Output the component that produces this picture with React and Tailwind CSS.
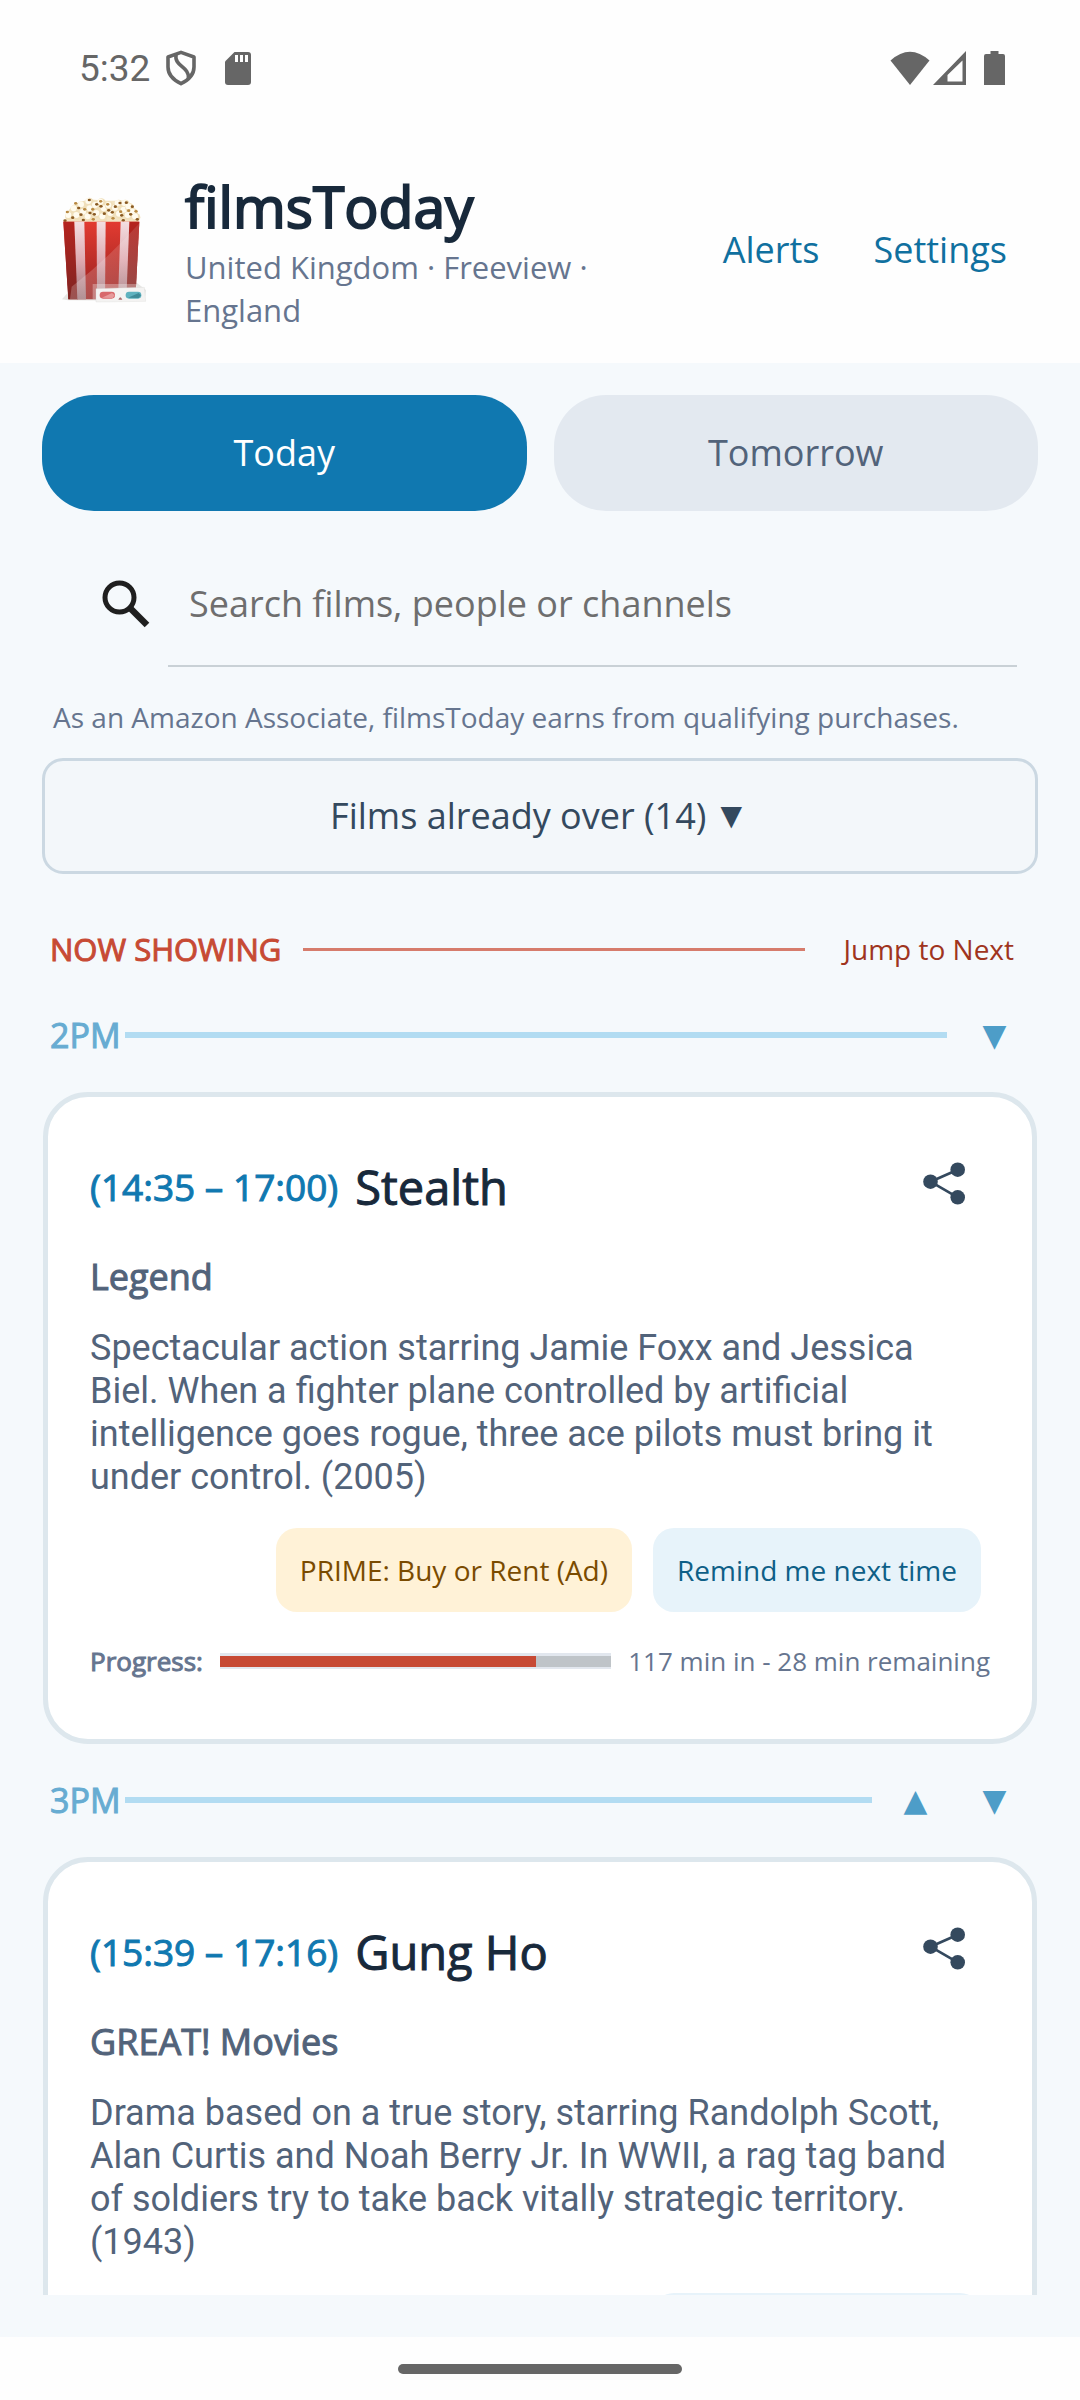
import React from "react";

const FILMS = [
  {
    hour: "2PM",
    up: false,
    time: "(14:35 – 17:00)",
    title: "Stealth",
    channel: "Legend",
    text: "Spectacular action starring Jamie Foxx and Jessica Biel. When a fighter plane controlled by artificial intelligence goes rogue, three ace pilots must bring it under control. (2005)",
    prime: true,
    progress: { elapsed: 117, remaining: 28 },
  },
  {
    hour: "3PM",
    up: true,
    time: "(15:39 – 17:16)",
    title: "Gung Ho",
    channel: "GREAT! Movies",
    text: "Drama based on a true story, starring Randolph Scott, Alan Curtis and Noah Berry Jr. In WWII, a rag tag band of soldiers try to take back vitally strategic territory. (1943)",
    prime: false,
    progress: null,
  },
];

const KERNELS = [
  [88, 108], [104, 88], [112, 108], [126, 76], [132, 98], [148, 66], [152, 88], [146, 112],
  [168, 78], [172, 102], [184, 68], [194, 88], [190, 112], [208, 78], [214, 102], [228, 86],
  [236, 72], [240, 104], [256, 72], [254, 92], [268, 82], [266, 108], [280, 98], [288, 112],
];

const SPECKS = [
  [82, 96], [75, 122], [98, 113], [107, 70], [116, 84], [123, 104], [134, 88], [148, 60], [150, 99],
  [158, 88], [163, 103], [170, 73], [182, 64], [183, 79], [193, 101], [203, 73], [206, 91],
  [217, 97], [219, 115], [226, 80], [240, 69], [242, 95], [245, 106], [259, 68], [266, 92],
  [272, 103], [277, 80], [288, 94], [292, 118], [130, 120], [160, 118], [250, 121],
];

function Popcorn() {
  return (
    <svg className="h-[140px] w-[130px] shrink-0" viewBox="0 0 390 420" aria-hidden="true">
      <defs>
        <linearGradient id="red" x1="0" y1="0" x2="0" y2="1">
          <stop offset="0" stopColor="#e23b31" />
          <stop offset="1" stopColor="#97211f" />
        </linearGradient>
        <linearGradient id="redSide" x1="0" y1="0" x2="0" y2="1">
          <stop offset="0" stopColor="#b5241f" />
          <stop offset="1" stopColor="#7f2421" />
        </linearGradient>
        <linearGradient id="pale" x1="0" y1="0" x2="0" y2="1">
          <stop offset="0" stopColor="#f3dfe1" />
          <stop offset="0.5" stopColor="#dfa9b0" />
          <stop offset="1" stopColor="#9d7478" />
        </linearGradient>
        <linearGradient id="shine" x1="1" y1="0" x2="0" y2="1">
          <stop offset="0" stopColor="#fff" stopOpacity="0.1" />
          <stop offset="1" stopColor="#fff" stopOpacity="0.22" />
        </linearGradient>
      </defs>
      <path d="M66 358 L82 340 L290 308 L318 330 L314 362 L85 361Z" fill="#e6e6e4" />
      <path d="M76 126 L80 98 L100 74 L145 58 L200 62 L255 62 L276 78 L296 126Z" fill="#f3e4c3" />
      {KERNELS.map(([x, y]) => (
        <g key={`${x}-${y}`}>
          <circle cx={x} cy={y} r="13" fill="#f0dfba" />
          <circle cx={x - 3} cy={y - 3} r="9" fill="#fffbee" />
        </g>
      ))}
      {SPECKS.map(([x, y], i) => (
        <ellipse key={`${x}-${y}`} cx={x} cy={y} rx="5" ry="4" fill={i % 3 ? "#8a5a22" : "#b98a43"} />
      ))}
      <path d="M70 125 H298 L286 358 H85Z" fill="url(#red)" />
      <path d="M70 125 H103 L114 358 H85Z" fill="url(#redSide)" />
      <path d="M267 125 H298 L286 358 H258Z" fill="url(#redSide)" />
      <path d="M103 125 H133 L138 358 H112Z" fill="url(#pale)" />
      <path d="M170 125 H197 L195 358 H171Z" fill="url(#pale)" />
      <path d="M242 125 H268 L259 358 H234Z" fill="url(#pale)" />
      <path d="M298 130 L286 358 H90 L95 320 Q200 240 298 130Z" fill="url(#shine)" />
      <path d="M158 312 H290 V358 H158Z" fill="#fff" opacity="0.3" />
      <path d="M168 326 L313 322 L317 364 L168 366Z" fill="#f4f3f2" stroke="#d9d7d6" />
      <rect x="179" y="335" width="46" height="21" rx="10" fill="#d8696c" />
      <path d="M186 353 L216 339 L224 346 L218 354Z" fill="#e79a9b" />
      <rect x="257" y="335" width="47" height="21" rx="10" fill="#5fb2bf" />
      <path d="M264 353 L296 339 L303 346 L296 354Z" fill="#3f8b98" />
      <path d="M235 359 Q241 344 247 359Z" fill="#a86a6c" />
    </svg>
  );
}

function StatusBar() {
  return (
    <div className="flex h-[136px] shrink-0 items-center justify-between pr-[75px] pl-[79px] text-[#666]">
      <div className="flex items-center">
        <span className="font-[Roboto,sans-serif] text-[37px] leading-[43px]">5:32</span>
        <svg className="ml-[15px] h-9 w-8" viewBox="0 0 32 36" fill="none" stroke="currentColor" strokeWidth="3.6" aria-hidden="true">
          <path d="M16 2.4 L29 7 V17 Q29 27.5 16 33.6 Q3 27.5 3 17 V7Z" strokeLinejoin="round" />
          <path d="M11 4 C9 17 24 16 23.500 28" />
        </svg>
        <svg className="ml-7 h-[34px] w-[26px]" viewBox="0 0 26 34" fill="currentColor" aria-hidden="true">
          <path d="M9.500 1 H23 Q26 1 26 4 V31 Q26 34 23 34 H3 Q0 34 0 31 V10.500Z" />
          <path d="M10 4 h3 v7 h-3z M15 4 h3 v7 h-3z M20 4 h3 v7 h-3z" fill="#fefefe" />
        </svg>
      </div>
      <div className="flex items-center">
        <svg className="h-[34px] w-10" viewBox="0 0 40 34" fill="currentColor" aria-hidden="true">
          <path d="M20 34 L0.500 9.500 Q20 -8 39.500 9.500Z" />
        </svg>
        <svg className="ml-[3px] h-[34px] w-[33px]" viewBox="0 0 33 34" fill="currentColor" aria-hidden="true">
          <path fillRule="evenodd" d="M33 0 V34 H0Z M29.500 9.500 L14.500 24 V30.500 H29.500Z" />
        </svg>
        <svg className="ml-[18px] h-[34px] w-[21px]" viewBox="0 0 21 34" fill="currentColor" aria-hidden="true">
          <path d="M6.500 0 H14.500 V3 H19 Q21 3 21 5 V34 H0 V5 Q0 3 2 3 H6.500Z" />
        </svg>
      </div>
    </div>
  );
}

function Header() {
  return (
    <header className="flex shrink-0 items-center py-[31px] pr-[46px] pl-10">
      <Popcorn />
      <div className="ml-[15px] min-w-0 flex-1">
        <h1 className="text-[57px] leading-[79px] text-[#18293b] [-webkit-text-stroke:2px]">filmsToday</h1>
        <p className="text-[31px] leading-[43px] text-[#66758f]">United Kingdom · Freeview · England</p>
      </div>
      <nav className="flex text-[36px] leading-[52px] text-[#10709f]">
        <a href="#alerts" className="px-[27px]">Alerts</a>
        <a href="#settings" className="px-[27px]">Settings</a>
      </nav>
    </header>
  );
}

function HourRow({ film }) {
  return (
    <div className="flex h-20 items-center pr-[46px] pl-[50px]">
      <h2 className="text-[34px] leading-[46px] text-[#67acd2] [-webkit-text-stroke:1px]">{film.hour}</h2>
      <span className={`ml-[5px] h-[6px] flex-1 bg-[#b2dcf2] ${film.up ? "mr-1" : "mr-2"}`} />
      <div className="flex text-[#4d9dc8]">
        {film.up && (
          <button type="button" aria-label="Previous hour" className="w-[79px] font-['DejaVu_Sans',sans-serif] text-[31px] leading-[46px]">
            ▲
          </button>
        )}
        <button type="button" aria-label="Next hour" className="w-[79px] font-['DejaVu_Sans',sans-serif] text-[31px] leading-[46px]">
          ▼
        </button>
      </div>
    </div>
  );
}

function Progress({ elapsed, remaining }) {
  const percent = (elapsed / (elapsed + remaining)) * 100;
  return (
    <div className="mt-[29px] flex h-10 items-center text-[26px] leading-9 text-[#66758f]">
      <span className="[-webkit-text-stroke:1px]">Progress:</span>
      <div
        role="progressbar"
        aria-label="Progress"
        aria-valuenow={elapsed}
        aria-valuemax={elapsed + remaining}
        className="mx-[17px] flex h-4 flex-1 items-center bg-[#e2e7ee]"
      >
        <div className="h-[11px] w-full bg-[#bfc4c8]">
          <div className="h-full bg-[#c74a34]" style={{ width: `${percent}%` }} />
        </div>
      </div>
      <span>
        {elapsed} min in - {remaining} min remaining
      </span>
    </div>
  );
}

function FilmCard({ film }) {
  return (
    <article className="mx-[43px] mt-[17px] rounded-[45px] border-[5px] border-[#dde7ed] bg-white px-[42px] pt-[42px] pb-[58px]">
      <div className="flex h-24 items-center">
        <span className="text-[37px] leading-[50px] text-[#1078b0] [-webkit-text-stroke:1px]">{film.time}</span>
        <h3 className="ml-[17px] flex-1 text-[47px] leading-[64px] text-[#18293b] [-webkit-text-stroke:1px]">{film.title}</h3>
        <button type="button" aria-label={`Share ${film.title}`} className="flex h-[88px] w-[92px] items-center justify-center self-start text-[#34495e]">
          <svg className="h-11 w-11" viewBox="0 0 44 44" fill="currentColor" aria-hidden="true">
            <path d="M35.700 8.700 L8.500 20.700 L35.700 36.300" fill="none" stroke="currentColor" strokeWidth="2.600" />
            <circle cx="8.500" cy="20.700" r="7.300" />
            <circle cx="35.700" cy="8.700" r="7.300" />
            <circle cx="35.700" cy="36.300" r="7.300" />
          </svg>
        </button>
      </div>
      <p className="mt-[17px] text-[36px] leading-[50px] text-[#52637a] [-webkit-text-stroke:1px]">{film.channel}</p>
      <p className="mt-[25px] pr-8 font-[Roboto,sans-serif] text-[36px] leading-[43px] text-[#52637a]">{film.text}</p>
      <div className="mt-[29px] mr-[9px] flex justify-end gap-[21px] text-[28px] leading-10">
        {film.prime && (
          <a href="#prime" className="flex h-[84px] items-center rounded-[21px] bg-[#fff2d7] px-6 text-[#7a4b00]">
            PRIME: Buy or Rent (Ad)
          </a>
        )}
        <button type="button" className="h-[84px] rounded-[21px] bg-[#e7f3fa] px-6 text-[#0e5f87]">
          Remind me next time
        </button>
      </div>
      {film.progress && <Progress {...film.progress} />}
    </article>
  );
}

export default function App() {
  return (
    <div className="flex h-screen flex-col bg-[#fefefe] font-['Open_Sans',sans-serif]">
      <StatusBar />
      <Header />
      <main className="flex min-h-0 flex-1 flex-col bg-[#f5f9fc] pt-8 pb-[42px]">
        <div className="mx-[42px] grid shrink-0 grid-cols-2 gap-[27px] text-[36px] leading-[52px]">
          <button type="button" className="h-[116px] rounded-[52px] bg-[#1078b0] text-white">Today</button>
          <button type="button" className="h-[116px] rounded-[52px] bg-[#e3e9f0] text-[#52637a]">Tomorrow</button>
        </div>
        <label className="mt-[30px] mr-[63px] ml-[102px] flex shrink-0 items-center">
          <svg className="h-12 w-12" viewBox="0 0 48 48" fill="none" stroke="#1f1f1f" aria-label="Search">
            <circle cx="17.500" cy="17.500" r="14.500" strokeWidth="5" />
            <path d="M28 28 L45 45" strokeWidth="6.500" />
          </svg>
          <input
            type="search"
            placeholder="Search films, people or channels"
            className="ml-[18px] h-[126px] min-w-0 flex-1 border-b-2 border-[#c9d1d6] pl-[21px] text-[36px] outline-none placeholder:text-[#6e6e6e]"
          />
        </label>
        <p className="mx-[53px] mt-[30px] shrink-0 text-[28px] leading-10 text-[#66758f]">
          As an Amazon Associate, filmsToday earns from qualifying purchases.
        </p>
        <div className="mt-[21px] min-h-0 flex-1 overflow-hidden">
          <div className="px-[42px]">
            <button type="button" className="flex h-[116px] w-full items-center justify-center gap-[14px] rounded-[21px] border-[3px] border-[#cbd8e2] bg-[#f3f7fa] pr-2 text-[36px] leading-[52px] text-[#34495e]">
              <span>Films already over (14)</span>
              <span className="font-['DejaVu_Sans',sans-serif] text-[28px]">▼</span>
            </button>
          </div>
          <div className="mt-[45px] flex h-[60px] items-center pr-[46px] pl-[50px]">
            <h2 className="text-[31px] leading-[42px] text-[#c74a34] [-webkit-text-stroke:1px]">NOW SHOWING</h2>
            <span className="mr-[18px] ml-[22px] h-[3px] flex-1 bg-[#d67c6c]" />
            <button type="button" className="px-5 text-[28px] leading-10 text-[#9f3420]">Jump to Next</button>
          </div>
          {FILMS.map((film) => (
            <section key={film.hour} className="mt-4">
              <HourRow film={film} />
              <FilmCard film={film} />
            </section>
          ))}
        </div>
      </main>
      <footer className="flex h-[63px] shrink-0 items-center justify-center">
        <span className="h-[10px] w-[284px] rounded-[5px] bg-[#666]" />
      </footer>
    </div>
  );
}
